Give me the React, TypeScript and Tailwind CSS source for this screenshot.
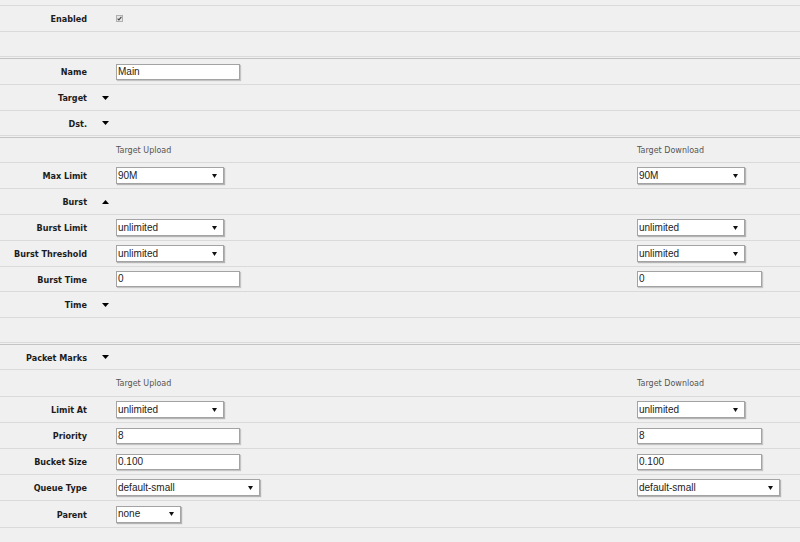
import React from "react";

const labelFont = { fontFamily: '"DejaVu Sans", Verdana, sans-serif' };
const inputFont = { fontFamily: '"Liberation Sans", Arial, sans-serif' };

function Arrow({ up }: { up?: boolean }) {
  return (
    <svg width="7" height="4" viewBox="0 0 7 4" className="ml-[15px] shrink-0">
      {up ? <polygon points="0,4 7,4 3.5,0" fill="#000" /> : <polygon points="0,0 7,0 3.5,4" fill="#000" />}
    </svg>
  );
}

function TextBox({ value, w = "w-[124px]" }: { value: string; w?: string }) {
  return (
    <div
      className={`${w} flex h-[16px] items-center border border-[#a3a3a3] bg-white pl-[1px] text-[10px] leading-none text-[#222] shadow-[1px_1px_1px_rgba(0,0,0,0.18)]`}
      style={inputFont}
    >
      {value}
    </div>
  );
}

function SelectBox({ value, w = "w-[108px]" }: { value: string; w?: string }) {
  return (
    <div
      className={`${w} flex h-[17px] items-center justify-between border border-[#a3a3a3] bg-white pl-[1px] pr-[6px] text-[10px] leading-none text-[#222] shadow-[1px_1px_1px_rgba(0,0,0,0.25)]`}
      style={inputFont}
    >
      <span>{value}</span>
      <svg width="5" height="4" viewBox="0 0 5 4">
        <polygon points="0,0 5,0 2.5,4" fill="#111" />
      </svg>
    </div>
  );
}

function Row({
  label,
  arrow,
  left,
  right,
  h = "h-[26px]",
}: {
  label?: string;
  arrow?: "up" | "down";
  left?: React.ReactNode;
  right?: React.ReactNode;
  h?: string;
}) {
  return (
    <div className={`flex ${h} items-center border-b border-[#dadada]`}>
      <div className="flex w-[116px] shrink-0 items-center">
        <div
          className="w-[87px] pt-[2px] text-right text-[8.1px] font-bold leading-none text-[#1c1c1c]"
          style={labelFont}
        >
          {label}
        </div>
        {arrow && <Arrow up={arrow === "up"} />}
      </div>
      <div className="w-[521px] shrink-0">{left}</div>
      <div className="flex-1">{right}</div>
    </div>
  );
}

function Header({ h }: { h?: string }) {
  const cls = "block pt-[1px] text-[8px] leading-none text-[#555]";
  return (
    <Row
      h={h}
      left={<span className={cls} style={labelFont}>Target Upload</span>}
      right={<span className={cls} style={labelFont}>Target Download</span>}
    />
  );
}

function Sep() {
  return <div className="h-[2px] border-b border-[#c4c4c4]" />;
}

function Check() {
  return (
    <div className="flex h-[7px] w-[7px] items-center justify-center border border-[#b0b0b0] bg-[#e6e6e6]">
      <svg width="5" height="5" viewBox="0 0 5 5">
        <polyline points="0.6,2.6 1.9,3.9 4.4,0.8" fill="none" stroke="#444" strokeWidth="1.1" />
      </svg>
    </div>
  );
}

export default function App() {
  return (
    <div className="h-[542px] w-[800px] overflow-hidden bg-[#f0f0f0]">
      <div className="h-[6px] border-b border-[#dadada]" />
      <Row label="Enabled" left={<Check />} />
      <Row h="h-[25px]" />
      <Sep />
      <Row label="Name" left={<TextBox value="Main" />} />
      <Row label="Target" arrow="down" />
      <Row label="Dst." arrow="down" h="h-[25px]" />
      <Sep />
      <Header h="h-[25px]" />
      <Row label="Max Limit" left={<SelectBox value="90M" />} right={<SelectBox value="90M" />} />
      <Row label="Burst" arrow="up" />
      <Row label="Burst Limit" left={<SelectBox value="unlimited" />} right={<SelectBox value="unlimited" />} />
      <Row label="Burst Threshold" left={<SelectBox value="unlimited" />} right={<SelectBox value="unlimited" />} />
      <Row label="Burst Time" left={<TextBox value="0" />} right={<TextBox value="0" w="w-[125px]" />} h="h-[25px]" />
      <Row label="Time" arrow="down" />
      <Row h="h-[25px]" />
      <Sep />
      <Row label="Packet Marks" arrow="down" h="h-[25px]" />
      <Header h="h-[27px]" />
      <Row label="Limit At" left={<SelectBox value="unlimited" />} right={<SelectBox value="unlimited" />} />
      <Row label="Priority" left={<TextBox value="8" />} right={<TextBox value="8" w="w-[125px]" />} />
      <Row label="Bucket Size" left={<TextBox value="0.100" />} right={<TextBox value="0.100" w="w-[125px]" />} />
      <Row
        label="Queue Type"
        left={<SelectBox value="default-small" w="w-[144px]" />}
        right={<SelectBox value="default-small" w="w-[143px]" />}
      />
      <Row label="Parent" left={<SelectBox value="none" w="w-[65px]" />} h="h-[27px]" />
    </div>
  );
}
